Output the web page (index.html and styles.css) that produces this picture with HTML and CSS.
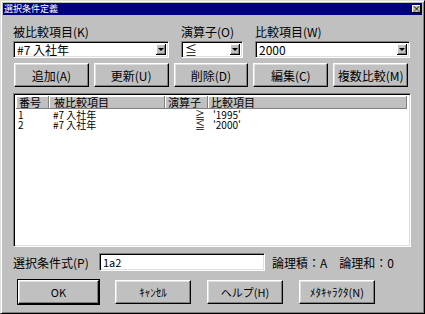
FILE: index.html
```html
<!DOCTYPE html>
<html lang="ja">
<head>
  <meta charset="UTF-8">
  <title>選択条件定義</title>
  <link rel="stylesheet" href="styles.css">
</head>
<body>

  <div class="dialog">
    <div class="titlebar">
      <span class="title">選択条件定義</span>
      <span class="close">×</span>
    </div>

    <div class="content">
      <div class="fields">
        <label>被比較項目(K)</label>
        <label>演算子(O)</label>
        <label>比較項目(W)</label>

        <div class="combo"><span class="value">#7 入社年</span><span class="drop"></span></div>
        <div class="combo"><span class="value">≦</span><span class="drop"></span></div>
        <div class="combo"><span class="value">2000</span><span class="drop"></span></div>
      </div>

      <div class="actions">
        <button>追加(A)</button>
        <button>更新(U)</button>
        <button>削除(D)</button>
        <button>編集(C)</button>
        <button>複数比較(M)</button>
      </div>

      <div class="listbox">
        <div class="row head">
          <span class="c-no">番号</span>
          <span class="c-item">被比較項目</span>
          <span class="c-op">演算子</span>
          <span class="c-val">比較項目</span>
        </div>
        <div class="row">
          <span class="c-no">1</span>
          <span class="c-item">#7 入社年</span>
          <span class="c-op">≧</span>
          <span class="c-val">'1995'</span>
        </div>
        <div class="row">
          <span class="c-no">2</span>
          <span class="c-item">#7 入社年</span>
          <span class="c-op">≦</span>
          <span class="c-val">'2000'</span>
        </div>
      </div>

      <div class="expr">
        <label>選択条件式(P)</label>
        <div class="field">1a2</div>
        <span class="logic">論理積：A　論理和：0</span>
      </div>

      <div class="footer">
        <button class="default">OK</button>
        <button>ｷｬﾝｾﾙ</button>
        <button>ヘルプ(H)</button>
        <button>ﾒﾀｷｬﾗｸﾀ(N)</button>
      </div>
    </div>
  </div>

</body>
</html>
```

FILE: styles.css
```css
body {
  margin: 0;
  padding: 0;
  font-family: "Noto Sans CJK JP", sans-serif;
  font-size: 12px;
  color: #000;
  background: #c0c0c0;
}
.dialog {
  width: 425px;
  height: 314px;
  box-sizing: border-box;
  background: #c0c0c0;
  border: 1px solid;
  border-color: #dfdfdf #000 #000 #dfdfdf;
  box-shadow: inset 1px 1px #fff, inset -1px -1px #808080;
  padding: 2px;
  display: flex;
  flex-direction: column;
}
.titlebar {
  height: 12px;
  background: #000080;
  color: #fff;
  display: flex;
  align-items: center;
  justify-content: space-between;
  padding: 0 1px 0 1px;
}
.title {
  font-size: 9px;
  line-height: 12px;
}
.close {
  width: 9px;
  height: 8px;
  background: #c0c0c0;
  color: #000;
  font-size: 9px;
  line-height: 8px;
  text-align: center;
  box-shadow: inset -1px -1px #000, inset 1px 1px #fff;
}
.content {
  padding: 9px 14px 0 9px;
  display: flex;
  flex-direction: column;
}
.fields {
  display: grid;
  grid-template-columns: 156px 62px 155px;
  column-gap: 12px;
  row-gap: 2px;
  margin-left: 1px;
}
.fields label {
  line-height: 15px;
}
.combo {
  height: 17px;
  box-sizing: border-box;
  background: #fff;
  border: 1px solid;
  border-color: #808080 #fff #fff #808080;
  box-shadow: inset 1px 1px #000, inset -1px -1px #dfdfdf;
  display: flex;
  align-items: center;
  padding: 2px 2px 2px 3px;
}
.value {
  flex: 1;
  line-height: 13px;
  white-space: nowrap;
}
.drop {
  position: relative;
  width: 10px;
  height: 11px;
  background: #c0c0c0;
  box-shadow: inset -1px -1px #000, inset 1px 1px #fff, inset -2px -2px #808080;
}
.drop::after {
  content: "";
  position: absolute;
  left: 2px;
  top: 4px;
  border-left: 3px solid transparent;
  border-right: 3px solid transparent;
  border-top: 3px solid #000;
}
button {
  font-family: "Noto Sans CJK JP", sans-serif;
  font-size: 12px;
  color: #000;
  background: #c0c0c0;
  border: 1px solid;
  border-color: #fff #000 #000 #fff;
  box-shadow: inset -1px -1px #808080, inset 1px 1px #dfdfdf;
  padding: 0;
  margin: 0;
}
.actions {
  display: flex;
  gap: 5px;
  margin: 5px 0 0 2px;
}
.actions button {
  width: 75px;
  height: 24px;
}
.listbox {
  margin: 6px 0 0 1px;
  width: 398px;
  height: 154px;
  box-sizing: border-box;
  background: #fff;
  border: 1px solid;
  border-color: #808080 #fff #fff #808080;
  box-shadow: inset 1px 1px #000, inset -1px -1px #dfdfdf;
  padding: 2px 3px 2px 2px;
}
.row {
  display: flex;
  font-size: 10px;
  line-height: 10px;
  height: 10px;
  white-space: nowrap;
}
.row.head {
  font-size: 11px;
  height: 13px;
  line-height: 13px;
  margin-bottom: 1px;
}
.row span {
  box-sizing: border-box;
  padding-left: 2px;
}
.row.head span {
  background: #c0c0c0;
  box-shadow: inset -1px -1px #808080, inset 1px 1px #fff;
  padding-left: 3px;
}
.c-no { width: 33px; }
.c-item { width: 116px; padding-left: 5px !important; }
.row:not(.head) .c-item { padding-left: 4px !important; }
.c-op { width: 43px; }
.row:not(.head) .c-op { padding-left: 30px; }
.c-val { flex: 1; }
.row:not(.head) .c-val { padding-left: 5px; }
.expr {
  display: flex;
  align-items: center;
  margin: 6px 0 0 1px;
  height: 18px;
}
.expr label {
  width: 86px;
}
.field {
  width: 166px;
  height: 18px;
  box-sizing: border-box;
  background: #fff;
  border: 1px solid;
  border-color: #808080 #fff #fff #808080;
  box-shadow: inset 1px 1px #000, inset -1px -1px #dfdfdf;
  padding: 0 3px;
  line-height: 16px;
  font-size: 11px;
}
.logic {
  margin-left: 7px;
}
.footer {
  display: flex;
  gap: 16px;
  margin: 9px 0 0 6px;
}
.footer button {
  width: 76px;
  height: 24px;
  font-size: 11px;
}
.footer button.default {
  width: 81px;
  outline: 1px solid #000;
}
```
